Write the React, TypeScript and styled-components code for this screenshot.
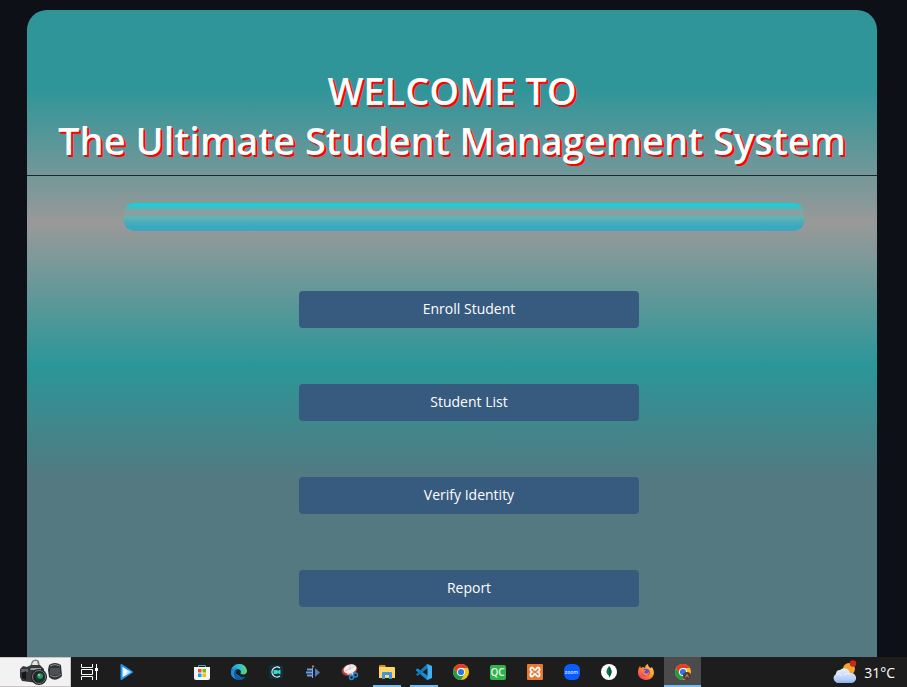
import React from 'react';
import styled, { createGlobalStyle } from 'styled-components';

const GlobalStyle = createGlobalStyle`
  * { box-sizing: border-box; }
  body {
    margin: 0;
    background: #0d1017;
    font-family: "Open Sans", "Noto Sans", sans-serif;
  }
`;

const Screen = styled.div`
  display: grid;
  grid-template-rows: minmax(0, 1fr) auto;
  height: 100vh;
`;

const Panel = styled.main`
  margin: 10px 30px 0 27px;
  border-radius: 20px 20px 0 0;
  overflow: hidden;
  background: linear-gradient(
    #2f9599 12%,
    #999 33%,
    #2b9698 55%,
    #547980 73%
  );
`;

const Header = styled.header`
  padding: 55px 0 10px;
  border-bottom: 1px solid #1b2730;
  text-align: center;
`;

const Title = styled.h1`
  margin: 0;
  color: #fff;
  font-size: 38px;
  font-weight: 600;
  line-height: 50px;
  white-space: nowrap;
  text-shadow: 2px 2px 0 #f00;
`;

const Banner = styled.div`
  width: 80%;
  height: 28px;
  margin: 27px 0 0 97px;
  border-radius: 10px;
  background: linear-gradient(#12d3da 5%, #999 33%, #5fb4b4 52%, #3ba8bf 82%);
`;

const Menu = styled.nav`
  display: flex;
  flex-direction: column;
  gap: 56px;
  width: 40%;
  margin: 60px 0 0 32%;
`;

const MenuButton = styled.button`
  height: 37px;
  padding: 0 12px 2px;
  border: 0;
  border-radius: 4px;
  background: #375a7f;
  color: #fff;
  font: 400 14px "Open Sans", "Noto Sans", sans-serif;
  cursor: pointer;
`;

const Taskbar = styled.footer`
  display: flex;
  height: 30px;
  background: #1d1d1d;
`;

const SearchHighlight = styled.button`
  display: flex;
  align-items: center;
  justify-content: flex-end;
  width: 71px;
  padding: 0 7px 0 0;
  border: 1px solid #c9c3c5;
  border-left: 0;
  background: #f2f2f2;
`;

const AppGroup = styled.div<{ $spaced?: boolean }>`
  display: flex;
  margin-left: ${(p) => (p.$spaced ? '38px' : '0')};
`;

const AppButton = styled.button<{ $open?: boolean; $active?: boolean }>`
  display: flex;
  align-items: center;
  justify-content: center;
  width: 37px;
  padding: 0;
  border: 0;
  background: ${(p) => (p.$active ? '#4b4b4b' : 'transparent')};
  background-image: ${(p) =>
    p.$open || p.$active ? 'linear-gradient(#76b9ed, #76b9ed)' : 'none'};
  background-position: bottom;
  background-repeat: no-repeat;
  background-size: ${(p) => (p.$active ? '100% 2px' : '28px 2px')};
`;

const Weather = styled.button`
  display: flex;
  align-items: center;
  gap: 7px;
  margin-left: auto;
  padding: 0 12px 0 0;
  border: 0;
  background: transparent;
  color: #fff;
  font: 400 14px "Open Sans", "Noto Sans", sans-serif;
`;

const Glyph = styled.svg`
  display: block;
  flex: none;
`;

const CameraIcon = () => (
  <Glyph width="44" height="26" viewBox="0 0 44 26">
    <path d="M11 8 13 2Q17-1 20 2L21 8Z" fill="#77797b" />
    <path d="M13 5 15 2h3l1 4-5 1Z" fill="#e4e4e4" />
    <path d="M1 10 4 7l4 1 4-2h9l4 4v12l-6 2-16-2L1 18Z" fill="#35373a" />
    <path d="M2 10h7v3H2Z" fill="#606366" />
    <path d="M3 14 7 12v9l-4-2Z" fill="#151719" />
    <path d="M12 9h10v2H11Z" fill="#999" />
    <circle cx="20" cy="18" r="8" fill="#202225" />
    <circle cx="20" cy="18" r="6.5" fill="none" stroke="#777b7d" />
    <circle cx="21" cy="18" r="4.5" fill="#123b2c" />
    <circle cx="21" cy="17" r="2.8" fill="#32966a" />
    <circle cx="20" cy="16" r="1" fill="#8cddb5" />
    <path d="M30 6q6-4 12 0l1 11q-7 7-13 1l-1-7Z" fill="#303235" />
    <path d="M31 7q5-3 10 0M31 16q6 4 11-1" fill="none" stroke="#898b8d" />
    <path d="M32 9v6m2-6v7m2-7v7m2-7v7m2-7v6" stroke="#6b6d70" />
  </Glyph>
);

const TaskViewIcon = () => (
  <Glyph width="18" height="18" viewBox="0 0 18 18" fill="none" stroke="#fff">
    <path d="M.5 1v3.500h11V1M.5 17v-3.500h11V17M.5 6.500h11v5H.5ZM15.500 1v16" />
    <path d="M14 5h3v3h-3Z" fill="#fff" stroke="none" />
  </Glyph>
);

const PlayIcon = () => (
  <Glyph width="16" height="18" viewBox="0 0 16 18">
    <path d="M2.500 2v14L13 9Z" fill="#f4faff" stroke="#2094f3" strokeWidth="2" strokeLinejoin="round" />
    <path d="m6 13 6-4-3-2Z" fill="#b9dcf8" />
  </Glyph>
);

const StoreIcon = () => (
  <Glyph width="16" height="16" viewBox="0 0 16 16">
    <path d="M4.500 4V1.500h7V4" fill="none" stroke="#38a6d8" />
    <path d="M0 3h16v11q0 2-2 2H2q-2 0-2-2Z" fill="#f5f5f5" />
    <path d="M4 5h3.500v3.500H4Z" fill="#f25022" />
    <path d="M8.500 5H12v3.500H8.500Z" fill="#7fba00" />
    <path d="M4 9.500h3.500V13H4Z" fill="#00a4ef" />
    <path d="M8.500 9.500H12V13H8.500Z" fill="#ffb900" />
  </Glyph>
);

const EdgeIcon = () => (
  <Glyph width="16" height="16" viewBox="0 0 16 16">
    <defs>
      <linearGradient id="edgeTop" x1="0" x2="1">
        <stop stopColor="#1b9de2" />
        <stop offset=".6" stopColor="#35c1d0" />
        <stop offset="1" stopColor="#67d957" />
      </linearGradient>
      <linearGradient id="edgeBase" x1="0" x2="1">
        <stop stopColor="#1686d9" />
        <stop offset="1" stopColor="#0d4b94" />
      </linearGradient>
    </defs>
    <path d="M0 7a8 8 0 0 0 8 9q4 0 6.500-3.500-4 1.500-6.500-1Z" fill="url(#edgeBase)" />
    <path d="M5.500 7c-2 5 3 8.500 9 5.500Q12 16 8 16 3 15 3 10q0-3 3-4Z" fill="#10599f" />
    <path d="M0 7C1-2 15-3 16 7c0 3-3 4-6 3-1-.5-.5-1 0-2 0-2-2-3-4-3Q2 4 0 7Z" fill="url(#edgeTop)" />
    <path d="M0 7q3-4 7-2-4 1-4 5 0 4 4 6Q-1 14 0 7Z" fill="#1b8de0" />
  </Glyph>
);

const RecorderIcon = () => (
  <Glyph width="14" height="14" viewBox="0 0 14 14">
    <rect width="14" height="14" rx="2" fill="#10303e" />
    <path d="M11 3A5 5 0 1 0 11 11" fill="none" stroke="#d9eeee" strokeWidth="1.300" />
    <path d="M4.500 5h4v1l3-1.500v5l-3-1.500v1h-4Z" fill="#35dbc0" />
  </Glyph>
);

const FlowIcon = () => (
  <Glyph width="16" height="16" viewBox="0 0 16 16">
    <path d="M2 5.500h5M1 8.500h6M2 11.500h5" stroke="#6d9ee2" strokeWidth="2" />
    <path d="M7.500 4v10" stroke="#7faaf0" />
    <path d="M10 4v9l5-4.500Z" fill="#527bb9" />
    <path d="M7 1.500h2v2H7Z" fill="#d97770" />
  </Glyph>
);

const SnipIcon = () => (
  <Glyph width="18" height="18" viewBox="0 0 18 18">
    <ellipse cx="8.500" cy="7" rx="8" ry="5.500" fill="#b93842" transform="rotate(-18 8.500 7)" />
    <ellipse cx="9" cy="6" rx="6.500" ry="4.500" fill="#f3efef" transform="rotate(-18 9 6)" />
    <path d="m4 8 10-5M9 2v5" stroke="#c9b5b8" strokeWidth=".7" />
    <path d="m6 11 7 0M12 9l-1 4" stroke="#e1e1e1" />
    <g fill="none" stroke="#278bd0" strokeWidth="1.400">
      <circle cx="10.500" cy="14.500" r="2" />
      <circle cx="14.500" cy="12" r="2" />
    </g>
  </Glyph>
);

const FolderIcon = () => (
  <Glyph width="16" height="16" viewBox="0 0 16 16">
    <path d="M0 2q0-1 1-1h5l1 2H0Z" fill="#d9940a" />
    <path d="M0 3h15q1 0 1 1v10H0Z" fill="#ffd766" />
    <path d="M3 15V9q0-1 1-1h8q1 0 1 1v6h-3v-4H6v4H3Z" fill="#4097dd" />
  </Glyph>
);

const CodeIcon = () => (
  <Glyph width="16" height="16" viewBox="0 0 16 16">
    <path d="m0 5.500 1.500-1.200L12 12v4h-1L0 6.500Z" fill="#168bd2" />
    <path d="M0 10.500 11 0h1v4L1.500 12Z" fill="#1878b5" />
    <path d="M11.500 0 16 2v12l-4.500 2Z" fill="#3eb1f5" />
  </Glyph>
);

const ChromeIcon = ({ badge }: { badge?: boolean }) => (
  <Glyph width="16" height="16" viewBox="0 0 16 16">
    <circle cx="8" cy="8" r="8" fill="#fbc116" />
    <path d="M1.070 4A8 8 0 0 1 14.930 4H8L4.540 10Z" fill="#e33b2e" />
    <path d="M1.070 4A8 8 0 0 0 8 16L11.460 10 8 12 4.540 10Z" fill="#259b48" />
    <circle cx="8" cy="8" r="4" fill="#fff" />
    <circle cx="8" cy="8" r="3.100" fill="#287ae6" />
    {badge && (
      <>
        <circle cx="12" cy="12" r="4" fill="#5a3931" />
        <path d="m10.500 13.500 1.500-3 1.500 3" fill="none" stroke="#bda49d" strokeWidth=".8" />
      </>
    )}
  </Glyph>
);

const Tile = styled.span`
  display: grid;
  place-items: center;
  width: 16px;
  height: 15px;
  border-radius: 2px;
  background: #2fb34a;
  color: #e4f6e6;
  font: 600 10px "Open Sans", sans-serif;
  line-height: 15px;
`;

const XamppIcon = () => (
  <Glyph width="16" height="16" viewBox="0 0 16 16">
    <rect width="16" height="16" rx="1" fill="#e97832" />
    <path
      d="M5 3.500c-2 0-2.500 3 0 4.500-2.500 1-2 4.500 0 4.500 1.500 0 2-2.500 3-2.500s1.500 2.500 3 2.500c2 0 2.500-3.500 0-4.500 2.500-1.500 2-4.500 0-4.500-1.500 0-2 2.500-3 2.500S6.500 3.500 5 3.500Z"
      fill="none"
      stroke="#fff"
      strokeWidth="1.800"
    />
  </Glyph>
);

const Disc = styled.span`
  display: grid;
  place-items: center;
  width: 16px;
  height: 16px;
  border-radius: 6px;
  background: #0b5cff;
  color: #dce8ff;
  font: 600 5px "Open Sans", sans-serif;
`;

const LeafIcon = () => (
  <Glyph width="16" height="16" viewBox="0 0 16 16">
    <circle cx="8" cy="8" r="8" fill="#fff" />
    <path d="M8 2c4 5 3 8 0 10Q3 8 8 2Z" fill="#13734c" />
    <path d="M8 2v12Q13 8 8 2Z" fill="#075a3c" />
  </Glyph>
);

const FirefoxIcon = () => (
  <Glyph width="16" height="16" viewBox="0 0 16 16">
    <defs>
      <linearGradient id="fox" x1="1" y1="0" x2="0" y2="1">
        <stop stopColor="#ffe14a" />
        <stop offset=".5" stopColor="#ff8a28" />
        <stop offset="1" stopColor="#f4227b" />
      </linearGradient>
    </defs>
    <path d="M2 2 3 4 5 3l2 1Q7 1 10 0q0 3 3 4l1-1q2 3 2 6c-1 9-14 9-16 1Q-.500 5 2 2Z" fill="url(#fox)" />
    <circle cx="8" cy="8.500" r="3.700" fill="#7048d3" />
    <path d="M4 6h4L6 8q2 3 5 0 0 4-3 4-4-1-4-6Z" fill="#ff832e" />
  </Glyph>
);

const WeatherIcon = () => (
  <Glyph width="26" height="24" viewBox="0 0 26 24">
    <defs>
      <linearGradient id="cloud" x1="0" y1="0" x2="0" y2="1">
        <stop stopColor="#e9f0fc" />
        <stop offset=".75" stopColor="#b6cff7" />
        <stop offset="1" stopColor="#83aff0" />
      </linearGradient>
    </defs>
    <circle cx="18" cy="9" r="6" fill="#f7a528" />
    <circle cx="22" cy="3.500" r="3.200" fill="#c5291f" />
    <path d="M6 23a5 5 0 0 1-1-9 4 4 0 0 1 4-4 6 6 0 0 1 10 3 5 5 0 0 1 2 10Z" fill="url(#cloud)" />
    <path d="M5 14q4-1 6 2m2-1q2-2 6-1" fill="none" stroke="#fff" opacity=".7" />
  </Glyph>
);

const actions = ['Enroll Student', 'Student List', 'Verify Identity', 'Report'];

type TaskItem = { name: string; icon: React.ReactNode; open?: boolean; active?: boolean };

const system: TaskItem[] = [
  { name: 'Task view', icon: <TaskViewIcon /> },
  { name: 'Player', icon: <PlayIcon /> },
];

const apps: TaskItem[] = [
  { name: 'Store', icon: <StoreIcon /> },
  { name: 'Edge', icon: <EdgeIcon /> },
  { name: 'Recorder', icon: <RecorderIcon /> },
  { name: 'Flow', icon: <FlowIcon /> },
  { name: 'Snipping tool', icon: <SnipIcon /> },
  { name: 'Explorer', icon: <FolderIcon />, open: true },
  { name: 'Code', icon: <CodeIcon />, open: true },
  { name: 'Chrome', icon: <ChromeIcon /> },
  { name: 'QC', icon: <Tile>QC</Tile> },
  { name: 'XAMPP', icon: <XamppIcon /> },
  { name: 'Zoom', icon: <Disc>zoom</Disc> },
  { name: 'MongoDB', icon: <LeafIcon /> },
  { name: 'Firefox', icon: <FirefoxIcon /> },
  { name: 'Chrome profile', icon: <ChromeIcon badge />, active: true },
];

const renderItem = (item: TaskItem) => (
  <AppButton key={item.name} aria-label={item.name} $open={item.open} $active={item.active}>
    {item.icon}
  </AppButton>
);

export default function App() {
  return (
    <>
      <GlobalStyle />
      <Screen>
        <Panel>
          <Header>
            <Title>
              WELCOME TO
              <br />
              The Ultimate Student Management System
            </Title>
          </Header>
          <Banner />
          <Menu>
            {actions.map((label) => (
              <MenuButton key={label}>{label}</MenuButton>
            ))}
          </Menu>
        </Panel>
        <Taskbar>
          <SearchHighlight aria-label="Search">
            <CameraIcon />
          </SearchHighlight>
          <AppGroup>{system.map(renderItem)}</AppGroup>
          <AppGroup $spaced>{apps.map(renderItem)}</AppGroup>
          <Weather>
            <WeatherIcon />
            31°C
          </Weather>
        </Taskbar>
      </Screen>
    </>
  );
}
